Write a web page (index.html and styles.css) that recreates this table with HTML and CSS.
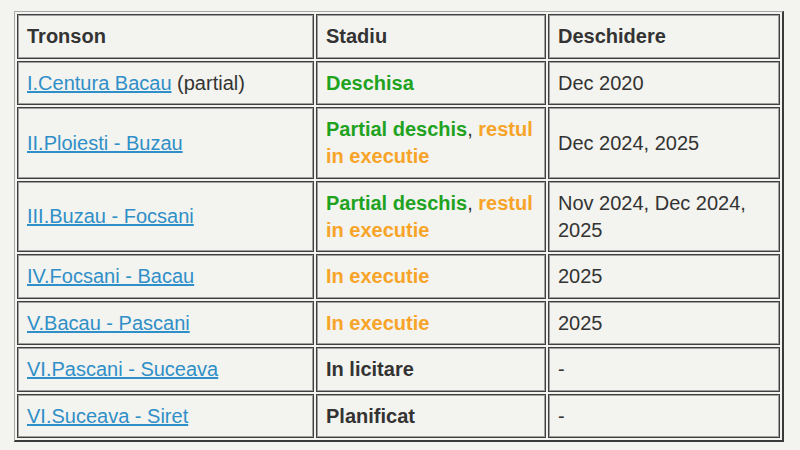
FILE: index.html
```html
<!DOCTYPE html>
<html lang="ro">
<head>
<meta charset="utf-8">
<title>Tronsoane</title>
<link rel="stylesheet" href="styles.css">
</head>
<body>
<table class="grid">
  <colgroup>
    <col class="c1">
    <col class="c2">
    <col class="c3">
  </colgroup>
  <thead>
    <tr><th>Tronson</th><th>Stadiu</th><th>Deschidere</th></tr>
  </thead>
  <tbody>
    <tr>
      <td><a href="#">I.Centura Bacau</a> (partial)</td>
      <td><b class="open">Deschisa</b></td>
      <td>Dec 2020</td>
    </tr>
    <tr>
      <td><a href="#">II.Ploiesti - Buzau</a></td>
      <td><b class="open">Partial deschis</b>, <b class="work">restul in executie</b></td>
      <td>Dec 2024, 2025</td>
    </tr>
    <tr>
      <td><a href="#">III.Buzau - Focsani</a></td>
      <td><b class="open">Partial deschis</b>, <b class="work">restul in executie</b></td>
      <td>Nov 2024, Dec 2024, 2025</td>
    </tr>
    <tr>
      <td><a href="#">IV.Focsani - Bacau</a></td>
      <td><b class="work">In executie</b></td>
      <td>2025</td>
    </tr>
    <tr>
      <td><a href="#">V.Bacau - Pascani</a></td>
      <td><b class="work">In executie</b></td>
      <td>2025</td>
    </tr>
    <tr>
      <td><a href="#">VI.Pascani - Suceava</a></td>
      <td><b>In licitare</b></td>
      <td>-</td>
    </tr>
    <tr>
      <td><a href="#">VI.Suceava - Siret</a></td>
      <td><b>Planificat</b></td>
      <td>-</td>
    </tr>
  </tbody>
</table>
</body>
</html>
```
FILE: styles.css
```css
html, body {
  margin: 0;
  background: #f3f3ef;
}
body {
  padding: 11px 0 0 14px;
  font-family: "Liberation Sans", Arial, sans-serif;
  font-size: 20px;
  line-height: 27px;
  color: #333;
}
.grid {
  table-layout: fixed;
  width: 768px;
  border-collapse: separate;
  border-spacing: 2px;
  border-top: 1px solid #a8a8a8;
  border-left: 1px solid #a8a8a8;
  border-right: 2px solid #3a3a3a;
  border-bottom: 2px solid #3a3a3a;
}
.c1 { width: 297px; }
.c2 { width: 230px; }
.c3 { width: 232px; }
.grid th,
.grid td {
  border: 1px solid #3f3f3f;
  box-shadow: inset 0 0 0 1px #a0a0a0;
  padding: 8px 9px 7.5px;
  text-align: left;
  vertical-align: middle;
  font-weight: normal;
}
.grid th {
  font-weight: bold;
}
.grid b {
  font-weight: bold;
}
.grid a {
  color: #2f8fc8;
  text-decoration: underline;
}
.open { color: #1fa31f; }
.work { color: #f7a428; }
```
